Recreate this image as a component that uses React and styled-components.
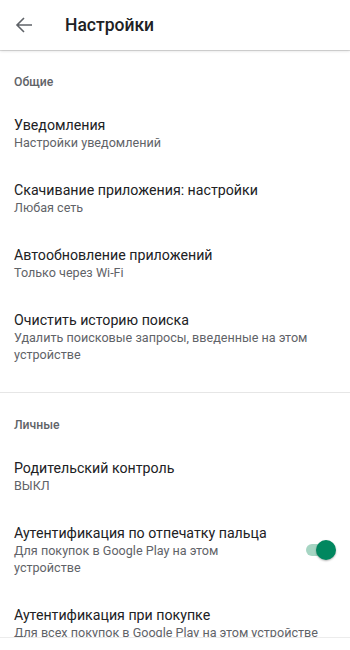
import React from 'react';
import styled, { createGlobalStyle } from 'styled-components';

const GlobalStyle = createGlobalStyle`
  html, body {
    margin: 0;
    padding: 0;
    background: #fff;
    font-family: Roboto, "Noto Sans", "Liberation Sans", sans-serif;
  }
`;

const Screen = styled.div`
  width: 350px;
  height: 650px;
  display: flex;
  flex-direction: column;
  overflow: hidden;
  background: #fff;
`;

const TopBar = styled.header`
  height: 50px;
  flex: none;
  display: flex;
  align-items: center;
  position: relative;
  z-index: 1;
  background: #fff;
  box-shadow: 0 1px 0 rgba(0, 0, 0, 0.12), 0 1px 3px rgba(0, 0, 0, 0.14);
`;

const BackButton = styled.button`
  width: 24px;
  height: 24px;
  margin-left: 12px;
  padding: 0;
  border: 0;
  background: none;
  display: flex;
  align-items: center;
  justify-content: center;
  cursor: pointer;
`;

const Title = styled.h1`
  margin: 0 0 0 29px;
  font-size: 17.5px;
  font-weight: 500;
  color: #202124;
`;

const Content = styled.main`
  flex: 1;
  overflow: hidden;
`;

const Section = styled.section`
  padding-bottom: ${p => (p.$last ? 0 : 14)}px;
  border-bottom: ${p => (p.$last ? 'none' : '1px solid #e6e6e6')};
`;

const SectionLabel = styled.div`
  padding: 24px 14px 11px;
  font-size: 12.2px;
  line-height: 16px;
  font-weight: 500;
  color: #5f6368;
`;

const Row = styled.div`
  display: flex;
  align-items: center;
  padding: 15px 14px;
  cursor: pointer;
`;

const RowText = styled.div`
  flex: 1;
  min-width: 0;
  padding-right: ${p => (p.$withControl ? 24 : 0)}px;
`;

const RowTitle = styled.div`
  font-size: 14.2px;
  line-height: 18px;
  color: #202124;
`;

const RowSub = styled.div`
  font-size: 12.6px;
  line-height: 17px;
  color: #5f6368;
`;

const SwitchTrack = styled.div`
  position: relative;
  flex: none;
  width: 26px;
  height: 12px;
  margin-right: 4px;
  border-radius: 6px;
  background: ${p => (p.$on ? '#a6d5c3' : '#bdbdbd')};
`;

const SwitchThumb = styled.span`
  position: absolute;
  top: -4px;
  left: ${p => (p.$on ? 10 : -2)}px;
  width: 20px;
  height: 20px;
  border-radius: 50%;
  background: ${p => (p.$on ? '#01875f' : '#f1f1f1')};
  box-shadow: 0 1px 2px rgba(0, 0, 0, 0.3);
`;

const BottomBar = styled.div`
  height: 12px;
  flex: none;
  background: #fff;
  border-top: 1px solid #ececec;
`;

const BackIcon = () => (
  <svg width="24" height="24" viewBox="0 0 24 24" fill="none">
    <path d="M20 12H5.5M12 5l-7 7 7 7" stroke="#5f6368" strokeWidth="1.6" />
  </svg>
);

const sections = [
  {
    label: 'Общие',
    items: [
      { title: 'Уведомления', sub: 'Настройки уведомлений' },
      { title: 'Скачивание приложения: настройки', sub: 'Любая сеть' },
      { title: 'Автообновление приложений', sub: 'Только через Wi-Fi' },
      { title: 'Очистить историю поиска', sub: 'Удалить поисковые запросы, введенные на этом устройстве' },
    ],
  },
  {
    label: 'Личные',
    items: [
      { title: 'Родительский контроль', sub: 'ВЫКЛ' },
      { title: 'Аутентификация по отпечатку пальца', sub: 'Для покупок в Google Play на этом устройстве', toggle: true },
      { title: 'Аутентификация при покупке', sub: 'Для всех покупок в Google Play на этом устройстве' },
    ],
  },
];

export default function App() {
  return (
    <Screen>
      <GlobalStyle />
      <TopBar>
        <BackButton aria-label="Назад">
          <BackIcon />
        </BackButton>
        <Title>Настройки</Title>
      </TopBar>
      <Content>
        {sections.map((section, i) => (
          <Section key={section.label} $last={i === sections.length - 1}>
            <SectionLabel>{section.label}</SectionLabel>
            {section.items.map(item => (
              <Row key={item.title}>
                <RowText $withControl={item.toggle}>
                  <RowTitle>{item.title}</RowTitle>
                  <RowSub>{item.sub}</RowSub>
                </RowText>
                {item.toggle && (
                  <SwitchTrack $on>
                    <SwitchThumb $on />
                  </SwitchTrack>
                )}
              </Row>
            ))}
          </Section>
        ))}
      </Content>
      <BottomBar />
    </Screen>
  );
}
